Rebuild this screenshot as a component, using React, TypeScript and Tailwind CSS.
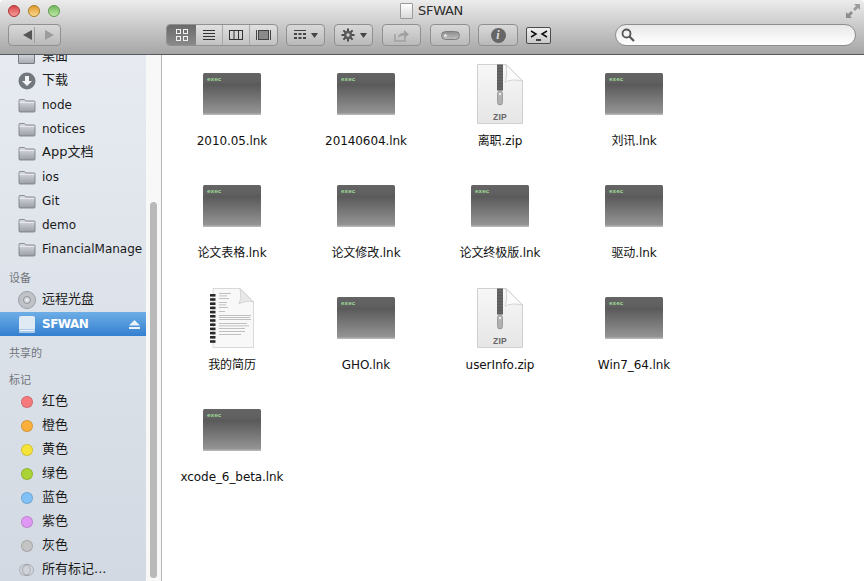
import type { ReactNode } from "react";

const SANS = "font-['DejaVu_Sans','Noto_Sans_CJK_SC',sans-serif]";

function FolderIcon() {
  return (
    <svg width="18" height="16" viewBox="0 0 18 16">
      <defs>
        <linearGradient id="fg" x1="0" y1="0" x2="0" y2="1">
          <stop offset="0" stopColor="#dcdfe4" />
          <stop offset="1" stopColor="#9a9ea6" />
        </linearGradient>
      </defs>
      <path d="M1 3.5a1 1 0 0 1 1-1h4.5l1.2 1.5H16a1 1 0 0 1 1 1v9a1 1 0 0 1-1 1H2a1 1 0 0 1-1-1z" fill="url(#fg)" stroke="#74777e" strokeWidth="0.8" />
      <path d="M1.5 5.5h15" stroke="#f2f3f5" strokeWidth="0.8" />
    </svg>
  );
}

function SideRow({ icon, label, selected, children }: { icon: ReactNode; label: string; selected?: boolean; children?: ReactNode }) {
  // the CJK names sit a point larger than the latin ones
  const cjk = /[^\x00-\x7f]/.test(label);
  return (
    <div className={`flex h-6 items-center ${selected ? "bg-gradient-to-b from-[#6eaee6] to-[#327fd0] font-bold tracking-[-0.5px] text-white" : "text-[#1a1a1a]"}`}>
      <div className="flex w-[42px] justify-center pl-[11px]">{icon}</div>
      <span className={`whitespace-nowrap ${cjk ? "-mt-[2px] text-[13px]" : ""}`}>{label}</span>
      {children}
    </div>
  );
}

function SideHead({ label, className }: { label: string; className: string }) {
  return <div className={`pl-[9px] text-[11px] leading-4 text-[#70757c] ${className}`}>{label}</div>;
}

function TagDot({ color }: { color: string }) {
  return <div className="h-3 w-3 rounded-full border border-black/15" style={{ backgroundColor: color }} />;
}

function ExecIcon() {
  return (
    <svg width="58" height="42" viewBox="0 0 58 42">
      <defs>
        <linearGradient id="ex" x1="0" y1="0" x2="0" y2="1">
          <stop offset="0" stopColor="#646464" />
          <stop offset="0.22" stopColor="#606060" />
          <stop offset="0.27" stopColor="#595959" />
          <stop offset="1" stopColor="#979797" />
        </linearGradient>
      </defs>
      <rect x="0" y="0" width="58" height="41.5" rx="1.5" fill="url(#ex)" />
      <rect x="0" y="40.5" width="58" height="1.5" rx="0.7" fill="#b4b4b4" />
      <text x="4" y="7.5" fontSize="6" fontWeight="bold" fontFamily="Liberation Mono, monospace" fill="#a0dc98">exec</text>
    </svg>
  );
}

function ZipIcon() {
  return (
    <svg width="46" height="60" viewBox="0 0 46 60">
      <defs>
        <linearGradient id="zp" x1="0" y1="0" x2="0" y2="1">
          <stop offset="0" stopColor="#f7f7f7" />
          <stop offset="1" stopColor="#e6e6e6" />
        </linearGradient>
      </defs>
      <path d="M0.5 0.5H29L45.5 17V59.5H0.5z" fill="url(#zp)" stroke="#d0d0d0" />
      <path d="M29 0.5C30 8 30 13 28 18C35 15 41 16 45.5 17z" fill="#fbfbfb" stroke="#c4c4c4" strokeWidth="0.7" />
      <rect x="20" y="0.5" width="6" height="26" fill="#5b5b5b" />
      <path d="M20 3h6M20 6h6M20 9h6M20 12h6M20 15h6M20 18h6M20 21h6M20 24h6" stroke="#757575" strokeWidth="0.8" />
      <rect x="20.5" y="27" width="5" height="14" rx="2.5" fill="#b0b0b0" stroke="#808080" strokeWidth="0.6" />
      <circle cx="23" cy="30" r="1.2" fill="#eeeeee" />
      <text x="23" y="56" textAnchor="middle" fontSize="8.5" fontWeight="bold" letterSpacing="0.3" fontFamily="Liberation Sans, sans-serif" fill="#666666">ZIP</text>
    </svg>
  );
}

function DocIcon() {
  const rings = [6, 10.2, 14.4, 18.6, 22.8, 27, 31.2, 35.4, 39.6, 43.8, 48, 52.2];
  const lines = [
    [5, 12], [7.5, 8], [10, 10], [14, 8], [16.5, 7], [19, 9], [23, 6],
    [27, 32], [29, 31], [31, 32], [35, 28], [37.5, 30], [40, 26], [43, 26], [46, 22],
  ];
  return (
    <svg width="44" height="60" viewBox="0 0 44 60">
      <path d="M3 0.5H30L43.5 14V59.5H3z" fill="#f8f8f8" stroke="#d8d8d8" />
      <path d="M30 0.5C31 6 31 11 29 16C34 13 40 13 43.500 14z" fill="#e8e8e8" stroke="#c4c4c4" strokeWidth="0.6" />
      {rings.map((y) => (
        <rect key={y} x="0" y={y} width="5.500" height="2.600" fill="#2a2a2a" />
      ))}
      {lines.map(([y, w]) => (
        <rect key={y} x="9" y={y} width={w} height="0.8" fill="#b2b2b2" />
      ))}
    </svg>
  );
}

function ToolBtn({ className, children }: { className: string; children: ReactNode }) {
  return (
    <div className={`flex h-[22px] items-center justify-center rounded-[4px] border border-[#909090] bg-gradient-to-b from-white/25 to-white/10 ${className}`}>
      {children}
    </div>
  );
}

function Caret() {
  return (
    <svg width="7" height="5" viewBox="0 0 7 5">
      <path d="M0 0h7L3.5 5z" fill="#444444" />
    </svg>
  );
}

function Gear({ size = 14 }: { size?: number }) {
  return (
    <svg width={size} height={size} viewBox="0 0 14 14">
      <g stroke="#4a4a4a" strokeWidth="2">
        <path d="M7 0.5v13M0.5 7h13M2.4 2.4l9.2 9.2M11.6 2.4l-9.2 9.2" />
      </g>
      <circle cx="7" cy="7" r="4.2" fill="#5a5a5a" />
      <circle cx="7" cy="7" r="1.7" fill="#cfcfcf" />
    </svg>
  );
}

const files: { name: string; kind: "exec" | "zip" | "doc" }[] = [
  { name: "2010.05.lnk", kind: "exec" },
  { name: "20140604.lnk", kind: "exec" },
  { name: "离职.zip", kind: "zip" },
  { name: "刘讯.lnk", kind: "exec" },
  { name: "论文表格.lnk", kind: "exec" },
  { name: "论文修改.lnk", kind: "exec" },
  { name: "论文终极版.lnk", kind: "exec" },
  { name: "驱动.lnk", kind: "exec" },
  { name: "我的简历", kind: "doc" },
  { name: "GHO.lnk", kind: "exec" },
  { name: "userInfo.zip", kind: "zip" },
  { name: "Win7_64.lnk", kind: "exec" },
  { name: "xcode_6_beta.lnk", kind: "exec" },
];

const folders = ["node", "notices", "App文档", "ios", "Git", "demo", "FinancialManage"];

const tags = [
  ["红色", "#f67a7c"],
  ["橙色", "#fcb03c"],
  ["黄色", "#f7e43a"],
  ["绿色", "#aad435"],
  ["蓝色", "#80c2f8"],
  ["紫色", "#e098f4"],
  ["灰色", "#c4c4c4"],
];

export default function App() {
  return (
    <div className={`flex h-[581px] w-[864px] flex-col overflow-hidden bg-white text-[12px] ${SANS}`}>
      {/* Toolbar */}
      <header className="relative h-[55px] shrink-0 rounded-t-[4px] border-b border-[#55585c] bg-gradient-to-b from-[#ececec] to-[#a6a6a6]">
        <div className="flex h-[22px] items-center">
          <div className="flex gap-2 pl-2">
            <div className="h-3 w-3 rounded-full border border-[#a33] bg-gradient-to-b from-[#d9434a] to-[#f59a9a]" />
            <div className="h-3 w-3 rounded-full border border-[#a87a20] bg-gradient-to-b from-[#e39a2a] to-[#f9d98a]" />
            <div className="h-3 w-3 rounded-full border border-[#5f9a4a] bg-gradient-to-b from-[#6fb95c] to-[#bfe8a6]" />
          </div>
          <div className="ml-[340px] flex items-center gap-[5px] text-[13px] tracking-[-0.3px] text-[#2c2c2c]">
            <div className="h-4 w-[13px] rounded-[1px] border border-[#9a9a9a] bg-gradient-to-b from-white to-[#d8d8d8]" />
            <span>SFWAN</span>
          </div>
          <svg className="absolute right-[4px] top-[4px]" width="14" height="14" viewBox="0 0 14 14" fill="#8c8c8c">
            <path d="M8 0h6v6l-2-2-3 3-2-2 3-3z" fill="#9c9c9c" />
            <path d="M6 14H0V8l2 2 3-3 2 2-3 3z" />
          </svg>
        </div>
        <div className="mt-[2px] flex items-center pl-2">
          <ToolBtn className="w-[53px]">
            <svg width="51" height="20" viewBox="0 0 51 20">
              <path d="M14 10l9-5v10z" fill="#555555" />
              <path d="M25.500 2v16" stroke="#a0a0a0" />
              <path d="M36 5l9 5-9 5z" fill="#9c9c9c" />
            </svg>
          </ToolBtn>
          <div className="ml-[105px] flex h-[22px] w-[112px] overflow-hidden rounded-[4px] border border-[#909090] bg-gradient-to-b from-white/40 to-white/20">
            <div className="flex w-[29px] items-center justify-center bg-gradient-to-b from-[#6a6a6a] to-[#8a8a8a]">
              <svg width="12" height="12" viewBox="0 0 12 12" fill="none" stroke="#f2f2f2">
                <rect x="0.5" y="0.5" width="4" height="4" />
                <rect x="7.5" y="0.5" width="4" height="4" />
                <rect x="0.5" y="7.5" width="4" height="4" />
                <rect x="7.5" y="7.5" width="4" height="4" />
              </svg>
            </div>
            <div className="flex w-[27px] items-center justify-center border-r border-[#a8a8a8]">
              <svg width="12" height="11" viewBox="0 0 12 11" stroke="#333333">
                <path d="M0 0.5h12M0 3.5h12M0 6.5h12M0 9.5h12" />
              </svg>
            </div>
            <div className="flex w-[27px] items-center justify-center border-r border-[#a8a8a8]">
              <svg width="14" height="10" viewBox="0 0 14 10" fill="none" stroke="#333333">
                <rect x="0.5" y="0.5" width="13" height="9" />
                <path d="M5 0v10M9.500 0v10" />
              </svg>
            </div>
            <div className="flex flex-1 items-center justify-center">
              <svg width="15" height="10" viewBox="0 0 15 10" stroke="#444444" fill="none">
                <path d="M0.500 0v10M14.500 0v10" />
                <rect x="2.500" y="0.500" width="10" height="9" fill="#8a8a8a" />
              </svg>
            </div>
          </div>
          <ToolBtn className="ml-2 w-[39px] gap-[5px]">
            <svg width="12" height="10" viewBox="0 0 12 10" fill="#444444">
              <path d="M0 0h12v1H0zM0 3h3v2H0zM4.500 3h3v2h-3zM9 3h3v2H9zM0 7h3v2H0zM4.500 7h3v2h-3zM9 7h3v2H9z" />
            </svg>
            <Caret />
          </ToolBtn>
          <ToolBtn className="ml-[9px] w-[39px] gap-[5px]">
            <Gear />
            <Caret />
          </ToolBtn>
          <ToolBtn className="ml-[9px] w-[39px]">
            <svg width="16" height="13" viewBox="0 0 16 13" fill="none">
              <path d="M1 5v7h10V8" stroke="#a0a0a0" strokeWidth="1.500" />
              <path d="M4 9c0-3 2-5 6-5V1l5 4.500L10 9V6.500C7 6.500 5.500 7.500 4 9z" fill="#a0a0a0" />
            </svg>
          </ToolBtn>
          <ToolBtn className="ml-[9px] w-[40px]">
            <div className="flex h-[9px] w-[19px] items-center rounded-full border border-[#7e7e7e] bg-gradient-to-b from-[#8f8f8f] to-[#bdbdbd] pl-[2px]">
              <div className="h-[3px] w-[3px] rounded-full bg-[#e4e4e4]" />
            </div>
          </ToolBtn>
          <ToolBtn className="ml-2 w-[40px]">
            <div className="flex h-[15px] w-[15px] items-center justify-center rounded-full bg-[#666666] font-['Liberation_Serif',serif] text-[12px] font-bold italic text-[#dddddd]">i</div>
          </ToolBtn>
          <div className="ml-2 flex h-[17px] w-[25px] items-center justify-center rounded-[2px] border border-[#4a4a4a] bg-gradient-to-b from-[#f0f0f0] to-[#c8c8c8]">
            <svg width="18" height="12" viewBox="0 0 18 12" fill="none" stroke="#111111" strokeWidth="1.500">
              <path d="M1 2l5 3-5 3M17 2l-5 3 5 3" />
              <path d="M6 11h5" />
            </svg>
          </div>
          <div className="ml-[64px] flex h-[22px] w-[241px] items-center rounded-full border border-[#8e8e8e] bg-gradient-to-b from-[#e8e8e8] to-white pl-[5px]">
            <svg width="14" height="14" viewBox="0 0 14 14" fill="none" stroke="#555555" strokeWidth="1.800">
              <circle cx="5.500" cy="5.500" r="4" />
              <path d="M8.500 8.500L13 13" strokeWidth="2.200" />
            </svg>
          </div>
        </div>
      </header>

      <div className="flex min-h-0 flex-1">
        {/* Sidebar */}
        <aside className="w-[146px] shrink-0 overflow-hidden bg-gradient-to-b from-[#e7ebf1] to-[#d2d9e2]">
          <div className="-mt-[10px]">
            <SideRow
              label="桌面"
              icon={
                <div className="flex h-[13px] w-[17px] items-end justify-center rounded-[1px] border border-[#777a80] bg-gradient-to-b from-[#dfe2e6] to-[#a9adb4]" />
              }
            />
            <SideRow
              label="下载"
              icon={
                <svg width="18" height="18" viewBox="0 0 18 18">
                  <circle cx="9" cy="9" r="8.500" fill="#73777e" />
                  <path d="M7 4h4v5h3l-5 5-5-5h3z" fill="#f2f3f5" />
                </svg>
              }
            />
            {folders.map((f) => (
              <SideRow key={f} label={f} icon={<FolderIcon />} />
            ))}
            <SideHead label="设备" className="mt-[10px]" />
            <div className="mt-[1px]">
              <SideRow
                label="远程光盘"
                icon={
                  <svg width="18" height="18" viewBox="0 0 18 18">
                    <circle cx="9" cy="9" r="8.500" fill="#c0c3c7" stroke="#9a9da2" />
                    <circle cx="9" cy="9" r="3.500" fill="#d6d9dc" stroke="#8f9297" />
                    <circle cx="9" cy="9" r="1.200" fill="#eeeff1" />
                  </svg>
                }
              />
            </div>
            <SideRow
              selected
              label="SFWAN"
              icon={
                <svg width="16" height="17" viewBox="0 0 16 17">
                  <rect width="16" height="17" rx="2" fill="#dfeaf5" />
                  <rect y="13" width="16" height="4" rx="1" fill="#a9cbea" />
                  <path d="M1 14.500h14" stroke="#f0f6fb" />
                </svg>
              }
            >
              <svg className="ml-auto mr-[6px]" width="11" height="9" viewBox="0 0 11 9" fill="#eaf2fa">
                <path d="M5.500 0L11 5.500H0zM0 7h11v2H0z" />
              </svg>
            </SideRow>
            <SideHead label="共享的" className="mt-[10px]" />
            <SideHead label="标记" className="mt-[11px]" />
            <div className="mt-[1px]">
              {tags.map(([label, color]) => (
                <SideRow key={label} label={label} icon={<TagDot color={color} />} />
              ))}
              <SideRow
                label="所有标记..."
                icon={
                  <div className="flex">
                    <div className="h-3 w-3 rounded-full border border-black/15 bg-[#cfd3d9]" />
                    <div className="-ml-[9px] h-3 w-3 rounded-full border border-black/20" />
                  </div>
                }
              />
            </div>
          </div>
        </aside>

        {/* Sidebar scrollbar */}
        <div className="w-4 shrink-0 border-r border-[#b8b8b8] bg-[#f8f8f8] pl-1 pr-[4px] pt-[147px] pb-[3px]">
          <div className="h-full w-[7px] rounded-full bg-[#b9b9b9]" />
        </div>

        {/* Files */}
        <main className="grid flex-1 grid-cols-[repeat(4,134px)] content-start pl-[3px] pt-[9px]">
          {files.map((f) => (
            <div key={f.name} className="flex h-[112px] flex-col items-center text-[#111111]">
              <div className="flex h-[60px] items-center justify-center">
                {f.kind === "exec" && <ExecIcon />}
                {f.kind === "zip" && <ZipIcon />}
                {f.kind === "doc" && <DocIcon />}
              </div>
              <div className="mt-[9px] h-4 whitespace-nowrap leading-4 tracking-[-0.08px]">{f.name}</div>
            </div>
          ))}
        </main>
      </div>
    </div>
  );
}
